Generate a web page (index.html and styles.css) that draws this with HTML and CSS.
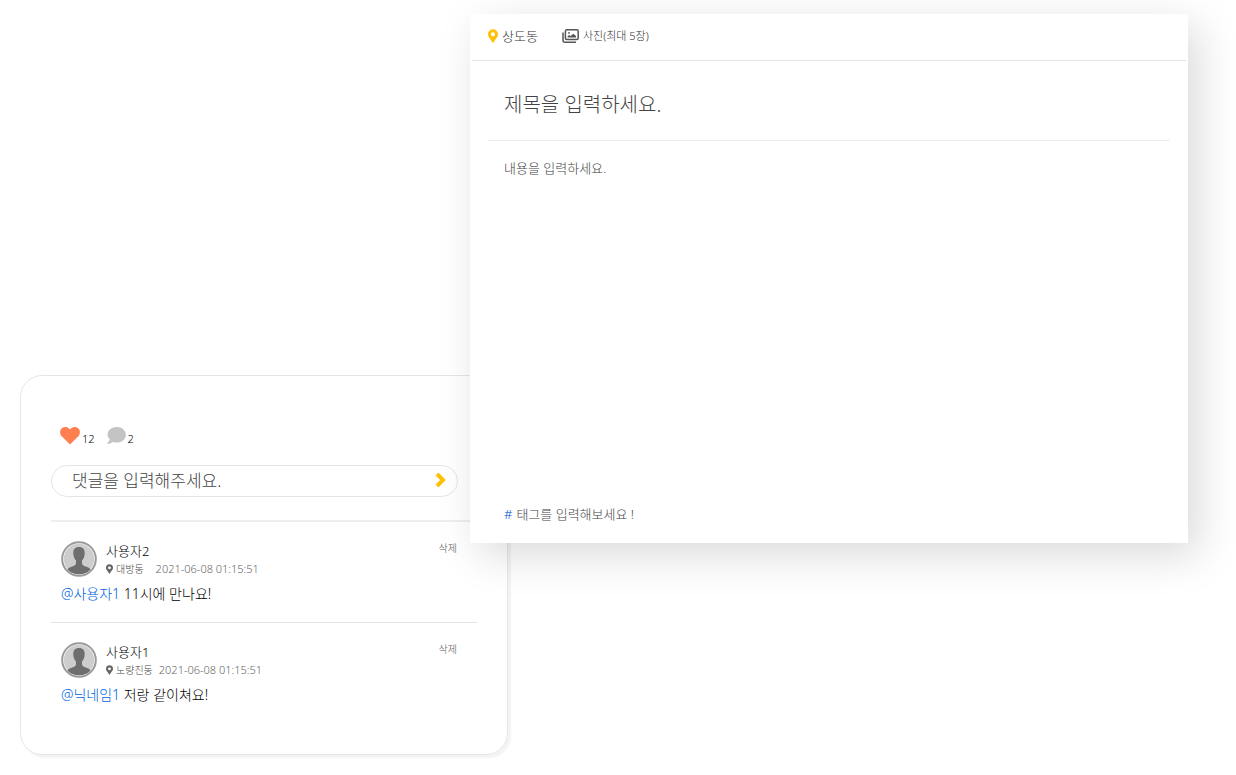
FILE: index.html
```html
<!DOCTYPE html>
<html lang="ko">
<head>
<meta charset="utf-8">
<meta name="viewport" content="width=device-width, initial-scale=1">
<title>글쓰기</title>
<link rel="stylesheet" href="styles.css">
</head>
<body>
<svg class="sprite" aria-hidden="true">
  <symbol id="pin" viewBox="0 0 384 512"><path d="M172 502C27 291 0 269 0 192a192 192 0 0 1 384 0c0 77-27 99-172 310a24 24 0 0 1-40 0zM192 272a80 80 0 1 0 0-160 80 80 0 0 0 0 160z"/></symbol>
  <symbol id="person" viewBox="0 0 36 36">
    <circle cx="18" cy="18" r="16.800" fill="#fff" stroke="#9a9a9a" stroke-width="2"/>
    <circle cx="18" cy="18" r="15.200" fill="#cdcdcd"/>
    <path fill="#6c6e70" d="M18 6c-4 0-6 2.600-5.700 6.800.1 3 1.300 5.200 2.700 6.700v2.800c0 2-2.200 2.600-5 3.600-1.800.6-3 1.300-3.600 2.500A15.200 15.200 0 0 0 18 33.200a15.200 15.200 0 0 0 11.600-4.800c-.6-1.200-1.800-1.900-3.600-2.500-2.800-1-5-1.600-5-3.600v-2.800c1.400-1.500 2.600-3.700 2.700-6.700C24 8.600 22 6 18 6z"/>
  </symbol>
</svg>
<main class="board">
  <section class="card" aria-label="댓글">
    <div class="stats">
      <button class="stat" type="button" aria-label="좋아요 12">
        <svg class="heart" viewBox="0 0 20 18"><path d="M10 17.600 1.700 9.200C-.6 6.700-.4 3 1.900 1.200 4.200-.6 7.500-.2 9.300 1.700L10 2.500l.7-.8c1.800-1.900 5.100-2.300 7.400-.5 2.300 1.800 2.500 5.500.2 8z"/></svg>
        <span>12</span>
      </button>
      <span class="stat">
        <svg class="bubble" viewBox="0 0 19 17"><path d="M9.800 0C4.700 0 .6 3.300.6 7.400c0 1.900.8 3.600 2.200 4.900C2.300 14 .9 15.300.3 15.900c-.4.4-.1.900.4.900 2.300 0 4.100-1 5.200-1.800 1.200.4 2.500.6 3.900.6 5.100 0 9.100-3.400 9.100-7.800S14.900 0 9.800 0z"/></svg>
        <span>2</span>
      </span>
    </div>
    <form class="reply">
      <input class="reply-input" type="text" placeholder="댓글을 입력해주세요." aria-label="댓글">
      <button class="send" type="button" aria-label="등록">
        <svg viewBox="0 0 12 16"><path d="M2 2l6 6-6 6" fill="none" stroke="#ffc107" stroke-width="4"/></svg>
      </button>
    </form>
    <ul class="comments">
      <li class="comment">
        <div class="head">
          <svg class="avatar"><use href="#person"/></svg>
          <div class="who">
            <div class="name">사용자2</div>
            <div class="meta"><svg class="meta-pin"><use href="#pin"/></svg><span class="place">대방동</span><time class="far">2021-06-08 01:15:51</time></div>
          </div>
          <button class="delete" type="button">삭제</button>
        </div>
        <p class="text"><a class="mention" href="#">@사용자1</a> 11시에 만나요!</p>
      </li>
      <li class="comment">
        <div class="head">
          <svg class="avatar"><use href="#person"/></svg>
          <div class="who">
            <div class="name">사용자1</div>
            <div class="meta"><svg class="meta-pin"><use href="#pin"/></svg><span class="place">노량진동</span><time>2021-06-08 01:15:51</time></div>
          </div>
          <button class="delete" type="button">삭제</button>
        </div>
        <p class="text"><a class="mention" href="#">@닉네임1</a> 저랑 같이쳐요!</p>
      </li>
    </ul>
  </section>
  <form class="editor">
    <div class="toolbar">
      <button class="tool" type="button"><svg class="tool-pin"><use href="#pin"/></svg>상도동</button>
      <button class="tool photo" type="button">
        <svg class="photos" viewBox="0 0 17 14" fill="none" stroke="#555"><path stroke-width="1.500" d="M1 3.500V11.200c0 1.200.8 2 2 2H14"/><rect x="3.400" y=".8" width="12.800" height="9.800" rx="1.500" stroke-width="1.500"/><path fill="#555" stroke="none" d="M5.600 8.500V7.300l1.500-1.300 1.500 1 2.600-2.300L14 7v1.500z"/><circle cx="7" cy="3.900" r=".9" fill="#555" stroke="none"/></svg>
        사진(최대 5장)
      </button>
    </div>
    <input class="title" type="text" placeholder="제목을 입력하세요." aria-label="제목">
    <textarea class="body" placeholder="내용을 입력하세요." aria-label="내용"></textarea>
    <div class="tags"><label for="tag">#</label><input id="tag" type="text" placeholder="태그를 입력해보세요 !"></div>
  </form>
</main>
</body>
</html>
```
FILE: styles.css
```css
* { box-sizing: border-box; }
body {
  margin: 0;
  background: #fff;
  color: #000;
  font-family: "Noto Sans", "Noto Sans CJK KR", sans-serif;
  font-weight: 300;
  font-size: 13px;
  line-height: 18px;
}
button, input, textarea {
  font: inherit;
  color: inherit;
  border: 0;
  padding: 0;
  background: none;
  outline: 0;
}
button { cursor: pointer; }
svg { display: block; flex: none; }
.sprite { position: absolute; width: 0; height: 0; }

/* The editor and the comment card share the middle track, where they overlap. */
.board {
  display: grid;
  grid-template-columns: 450fr 38px 680fr;
  grid-template-rows: minmax(361px, auto) 168px auto;
  padding: 14px 48px 20px 20px;
}
.card {
  grid-area: 2 / 1 / 4 / 3;
  border: 1px solid #e6e6e6;
  border-radius: 22px;
  box-shadow: 3px 3px 2px #f3f3f3;
  padding: 50px 30px 31px;
}
.stats { display: flex; gap: 12px; padding-left: 9px; }
.stat { display: flex; align-items: flex-start; gap: 2px; font-size: 11px; line-height: 16px; }
.stat span { padding-top: 5px; }
.heart { width: 20px; height: 18px; margin-top: 1px; fill: #ff7f50; }
.bubble { width: 19px; height: 17px; margin-top: 1px; fill: #c4c4c4; }
.reply {
  display: flex;
  align-items: center;
  height: 32px;
  margin: 18px 19px 23px 0;
  padding: 0 10px 2px 20px;
  border: 1px solid #e6e6e6;
  border-radius: 16px;
}
.reply-input { flex: 1; min-width: 0; height: 26px; font-size: 17px; }
.send svg { width: 12px; height: 16px; }
.comments { margin: 0; padding: 0; list-style: none; border-top: 2px solid #eee; }
.comment { padding: 18px 20px 18px 10px; }
.comment + .comment { border-top: 1px solid #e6e6e6; }
.head { display: flex; align-items: flex-start; gap: 9px; }
.avatar { width: 36px; height: 36px; margin-top: 1px; }
.who { flex: 1; padding-top: 1px; }
.name { line-height: 20px; }
.meta { display: flex; align-items: center; gap: 3px; font-size: 10px; line-height: 16px; color: #444; }
.meta-pin { width: 7px; height: 10px; fill: #666; }
.meta time { font-size: 11px; color: #666; margin-left: 3px; }
.meta .far { margin-left: 9px; }
.delete { font-size: 10px; line-height: 16px; color: #555; }
.text { margin: 7px 0 0; font-size: 14px; line-height: 20px; }
.mention { color: #0064e0; text-decoration: none; }

.editor {
  grid-area: 1 / 2 / 3 / 4;
  z-index: 1;
  display: flex;
  flex-direction: column;
  background: #fff;
  box-shadow: 10px 12px 40px rgba(0, 0, 0, 0.15);
}
.toolbar {
  display: flex;
  gap: 24px;
  height: 47px;
  margin: 0 2px;
  padding: 0 16px 2px;
  border-bottom: 1px solid #e6e6e6;
}
.tool { display: flex; align-items: center; gap: 4px; color: #333; }
.tool-pin { width: 10px; height: 14px; fill: #ffc107; }
.photo { font-size: 11px; }
.photos { width: 17px; height: 14px; }
.title {
  height: 80px;
  margin: 0 18px;
  padding: 8px 16px 0;
  border-bottom: 1px solid #eee;
  font-size: 20px;
}
.body { flex: 1; resize: none; margin: 18px 34px 0; }
.tags { display: flex; gap: 4px; padding: 0 34px 20px; }
.tags label { color: #0050d0; }
.tags input { flex: 1; min-width: 0; }
::placeholder { color: #444; opacity: 1; }
```
